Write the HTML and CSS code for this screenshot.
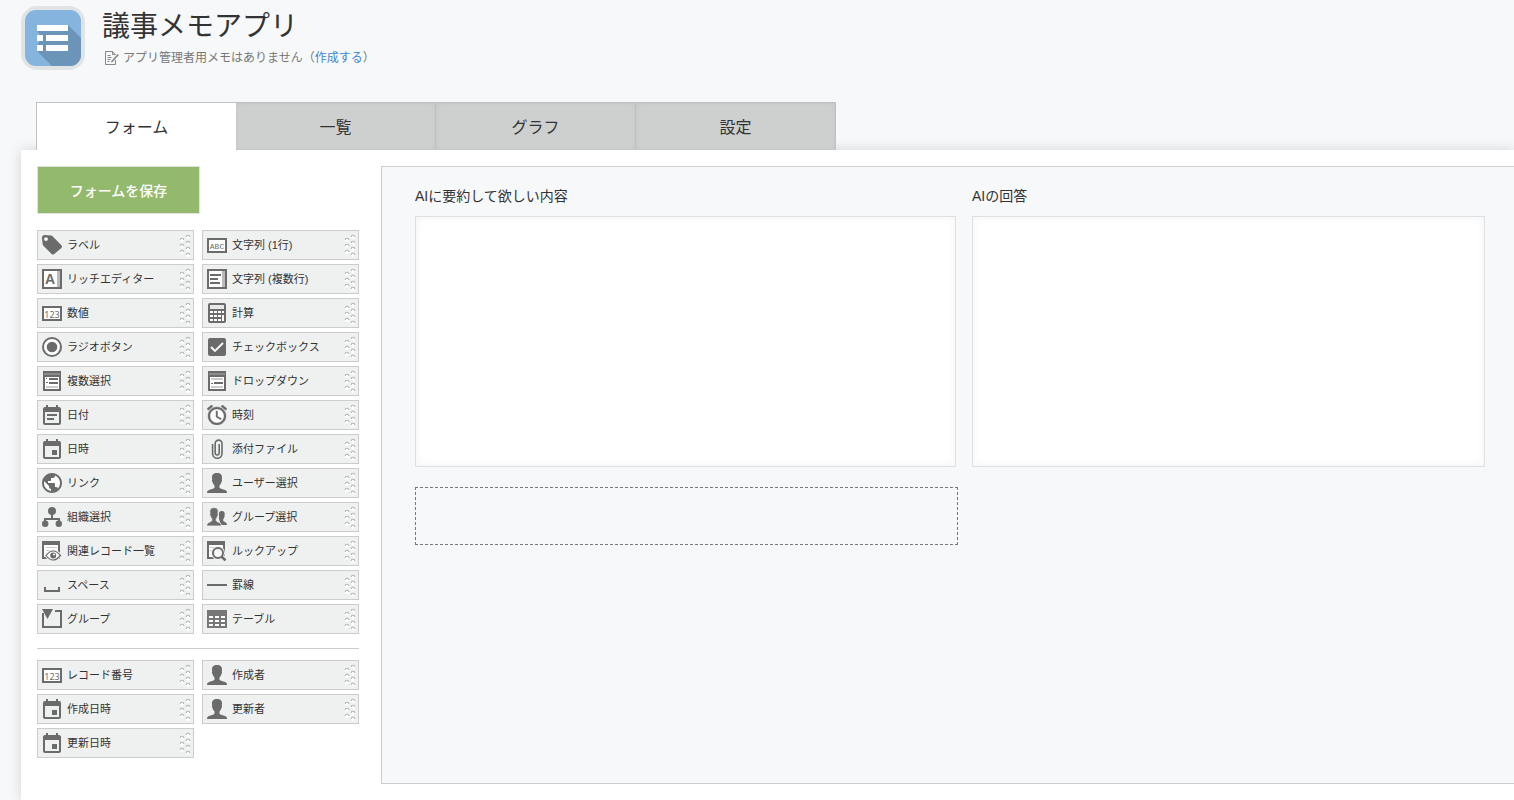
FILE: index.html
```
<!DOCTYPE html>
<html lang="ja">
<head>
<meta charset="utf-8">
<meta name="viewport" content="width=device-width, initial-scale=1">
<title>議事メモアプリ</title>
<link rel="stylesheet" href="styles.css">
</head>
<body>
<svg class="sprite" aria-hidden="true">
  <symbol id="grip" viewBox="0 0 12 24">
    <g fill="#fff"><circle cx="3" cy="7" r="2"/><circle cx="3" cy="13" r="2"/><circle cx="3" cy="19" r="2"/><circle cx="9" cy="4" r="2"/><circle cx="9" cy="10" r="2"/><circle cx="9" cy="16" r="2"/><circle cx="9" cy="22" r="2"/></g>
    <path fill="none" stroke="#b4b5b5" stroke-width="1.1" d="M1.2 7q0-1.8 1.8-1.8T4.8 7M1.2 13q0-1.8 1.8-1.8T4.8 13M1.2 19q0-1.8 1.8-1.8T4.8 19M7.2 4q0-1.8 1.8-1.8T10.8 4M7.2 10q0-1.8 1.8-1.8T10.8 10M7.2 16q0-1.8 1.8-1.8T10.8 16M7.2 22q0-1.8 1.8-1.8T10.8 22"/>
  </symbol>
  <symbol id="i-label" viewBox="2 2 20 20"><circle cx="6" cy="6" r="2" fill="#fff"/><path d="M21.4 12.2l-8.600-8.600C12.200 2.900 11.600 2.700 11 2.600L5 2C3 1.900 1.900 3 2 5l.6 6c.1.600.3 1.200.8 1.700l8.200 8.300c.7.800 1.900.8 2.700 0l7.100-6.100c.8-.8.8-1.900 0-2.700zM6 8a1.900 1.900 0 1 1 0-3.800A1.900 1.900 0 0 1 6 8z"/></symbol>
  <symbol id="i-rich" viewBox="0 0 20 20"><path d="M0 0h20v20H0z"/><path fill="#fff" d="M2 2h13v16H2z"/><path fill="#bbb" d="M15 2h3v16h-3z"/><text x="8" y="15" font-size="14" font-weight="700" text-anchor="middle">A</text></symbol>
  <symbol id="i-number" viewBox="0 0 20 20"><path d="M0 3h20v15H0z"/><path fill="#fff" d="M2 5h16v11H2z"/><text x="10" y="15" font-size="9" text-anchor="middle" class="digits">123</text></symbol>
  <symbol id="i-text" viewBox="0 0 20 20"><path d="M0 3h20v15H0z"/><path fill="#fff" d="M2 5h16v11H2z"/><text x="10" y="14" font-size="8" text-anchor="middle" class="mono">ABC</text></symbol>
  <symbol id="i-radio" viewBox="0 0 20 20"><circle cx="10" cy="10" r="9" fill="#fff" stroke="#6b6b6b" stroke-width="2"/><circle cx="10" cy="10" r="5.300"/></symbol>
  <symbol id="i-multitext" viewBox="0 0 20 20"><path d="M0 0h20v20H0z"/><path fill="#fff" d="M2 2h13v16H2z"/><path fill="#bbb" d="M15 2h3v16h-3z"/><path d="M3 5h11v2H3zM3 9h8v2H3zM3 13h10v2H3z"/></symbol>
  <symbol id="i-calc" viewBox="0 0 20 20"><path d="M3 0h14a2 2 0 0 1 2 2v16a2 2 0 0 1-2 2H3a2 2 0 0 1-2-2V2a2 2 0 0 1 2-2z"/><path fill="#e7e8e8" d="M3 2h14v4H3z"/><path fill="#fff" d="M3 8h3v2H3zm4 0h3v2H7zm4 0h3v2h-3zm4 0h2v2h-2zM3 12h3v2H3zm4 0h3v2H7zm4 0h3v2h-3zM3 16h3v2H3zm4 0h3v2H7zm4 0h3v2h-3zm4-4h2v6h-2z"/></symbol>
  <symbol id="i-check" viewBox="0 0 20 20"><rect x="1" y="1" width="18" height="18" rx="2"/><path fill="none" stroke="#fff" stroke-width="1.800" d="M4 10l4 4 8-8"/></symbol>
  <symbol id="i-multiselect" viewBox="0 0 20 20"><path d="M1 0h18v20H1z"/><path fill="#8b8b8b" d="M2 2h16v2H2z"/><path fill="#fff" d="M3 6h14v12H3z"/><path d="M7 7h9v2H7zM7 11h9v2H7zM4 7h1v1H4zm0 4h2v1H4z"/><path fill="#ccc" d="M4 15h12v2H4z"/></symbol>
  <symbol id="i-dropdown" viewBox="0 0 20 20"><path d="M1 0h18v20H1z"/><path fill="#8b8b8b" d="M2 2h16v2H2z"/><path fill="#fff" d="M3 6h14v12H3z"/><path d="M7 11h9v2H7zM4 12h2v1H4z"/><path fill="#ccc" d="M4 7h12v2H4zM4 15h12v2H4z"/></symbol>
  <symbol id="i-date" viewBox="2 1 20 20"><path d="M17 10H7v2h10v-2zm2-7h-1V1h-2v2H8V1H6v2H5c-1.110 0-1.990.9-1.990 2L3 19c0 1.100.89 2 2 2h14c1.100 0 2-.9 2-2V5c0-1.100-.9-2-2-2zm0 16H5V8h14v11zm-5-5H7v2h7v-2z"/></symbol>
  <symbol id="i-datetime" viewBox="2 1 20 20"><path d="M17 12h-5v5h5v-5zM16 1v2H8V1H6v2H5c-1.110 0-1.990.9-1.990 2L3 19c0 1.100.89 2 2 2h14c1.100 0 2-.9 2-2V5c0-1.100-.9-2-2-2h-1V1h-2zm3 18H5V8h14v11z"/></symbol>
  <symbol id="i-time" viewBox="2 2 20 20"><circle cx="12" cy="13" r="8" fill="#fff"/><path stroke="#6b6b6b" stroke-width=".4" d="M22 5.720l-4.600-3.860-1.290 1.530 4.600 3.860L22 5.720zM7.880 3.390L6.600 1.860 2 5.710l1.290 1.530 4.590-3.850zM12.500 8H11v6l4.750 2.850.75-1.230-4-2.370V8zM12 4c-4.970 0-9 4.030-9 9s4.020 9 9 9c4.970 0 9-4.030 9-9s-4.030-9-9-9zm0 16c-3.870 0-7-3.130-7-7s3.130-7 7-7 7 3.130 7 7-3.130 7-7 7z"/></symbol>
  <symbol id="i-clip" viewBox="0 0 20 20"><path fill="none" stroke="#6b6b6b" stroke-width="1.600" d="M12.200 5v9a2 2 0 0 1-4 0V4.500a3.400 3.400 0 0 1 6.800 0V14.500a4.700 4.700 0 0 1-9.400 0V5"/></symbol>
  <symbol id="i-link" viewBox="2 2 20 20"><circle cx="12" cy="12" r="9" fill="#fff"/><path d="M12 2C6.480 2 2 6.480 2 12s4.480 10 10 10 10-4.480 10-10S17.520 2 12 2zm-1 17.930c-3.950-.49-7-3.850-7-7.930 0-.62.08-1.210.21-1.790L9 15v1c0 1.100.9 2 2 2v1.930zm6.900-2.540c-.26-.81-1-1.390-1.900-1.390h-1v-3c0-.55-.45-1-1-1H8v-2h2c.55 0 1-.45 1-1V7h2c1.100 0 2-.9 2-2v-.41c2.930 1.190 5 4.060 5 7.410 0 2.080-.8 3.970-2.100 5.390z"/></symbol>
  <symbol id="i-user" viewBox="0 0 20 20"><path d="M10 0c3.600 0 5.200 1.800 5 4.600 0 1-.1 1.500-.2 2.200.5.400.3 1.600-.4 2.200-.4 1.800-1 2.700-1.900 3.500v2.300c1 1.300 3.700 1.400 5.500 2.100 1.300.5 2 1.400 2 3.100H0c0-1.700.7-2.600 2-3.100 1.800-.7 4.500-.8 5.500-2.100v-2.300c-.9-.8-1.500-1.700-1.900-3.500-.7-.6-.9-1.800-.4-2.200C5.100 6.100 5 5.600 5 4.600 4.800 1.800 6.400 0 10 0z"/></symbol>
  <symbol id="i-org" viewBox="0 0 20 20"><circle cx="10" cy="4" r="4"/><circle cx="3.200" cy="16.800" r="3.200"/><circle cx="16.800" cy="16.800" r="3.200"/><path fill="none" stroke="#6b6b6b" stroke-width="2" d="M10 6v6M3 16v-4h14v4"/></symbol>
  <symbol id="i-group-user" viewBox="0 0 20 20"><path d="M14.800 4c2.200 0 3 1.200 2.900 3.100l-.2 1.600c.4.400.2 1.200-.3 1.600-.2 1-.6 1.600-1 2v1.700c.6 1 3.800.8 3.800 4h-6L12 12V6c.5-1.400 1.300-2 2.800-2z"/><path stroke="#eff1f1" stroke-width=".8" d="M7 .6c3.200 0 4.400 1.700 4.200 4.200L11 6.900c.5.500.3 1.500-.4 2-.3 1.400-.8 2.200-1.400 2.700v2.200c.9 1.600 5.200 1.100 5.200 5.200H-.4c0-4.100 4.300-3.600 5.200-5.200v-2.200c-.6-.5-1.100-1.300-1.400-2.700-.7-.5-.9-1.500-.4-2l-.2-2.100C2.600 2.300 3.800.6 7 .6z"/></symbol>
  <symbol id="i-related" viewBox="0 0 20 20"><path d="M0 0h18v18H0z"/><path fill="#fff" d="M2 4h14v12H2z"/><path fill="#ccc" d="M4 6h11v1H4zM4 9h5v1H4z"/><path fill="#fff" stroke="#eff1f1" stroke-width="3" d="M4 14.500q7-9 14.500 0q-7.500 9-14.500 0z"/><path fill="#fff" stroke="#6b6b6b" stroke-width="1.200" d="M4 14.500q7-9 14.500 0q-7.500 9-14.500 0z"/><circle cx="11.200" cy="14.500" r="3"/><circle cx="12" cy="13.500" r="1" fill="#fff"/></symbol>
  <symbol id="i-lookup" viewBox="0 0 20 20"><path d="M0 0h18v18H0z"/><path fill="#fff" d="M2 4h14v12H2z"/><path fill="#ccc" d="M3 6h12v1H3zM3 9h3v1H3z"/><circle cx="11" cy="12" r="5" fill="#eff1f1" stroke="#eff1f1" stroke-width="4"/><path fill="#eff1f1" d="M13 15h6v4h-6z"/><circle cx="11" cy="12" r="5" fill="#f7f8f8" stroke="#6b6b6b" stroke-width="2"/><path stroke="#6b6b6b" stroke-width="2.500" d="M14.500 15.500l4 4"/></symbol>
  <symbol id="i-space" viewBox="0 0 20 20"><path fill="none" stroke="#6b6b6b" stroke-width="2" d="M3 12v4h14v-4"/></symbol>
  <symbol id="i-line" viewBox="0 0 20 20"><path d="M0 9h20v2H0z"/></symbol>
  <symbol id="i-group" viewBox="0 0 20 20"><path d="M0 0h11L5.500 10z"/><path fill="none" stroke="#6b6b6b" stroke-width="2" d="M1 4v14h18V2h-6"/></symbol>
  <symbol id="i-table" viewBox="0 0 20 20"><path fill="#777" d="M0 1h20v18H0z"/><path fill="#fff" d="M2 7h4v2H2zm6 0h4v2H8zm6 0h4v2h-4zM2 11h4v2H2zm6 0h4v2H8zm6 0h4v2h-4zM2 15h4v2H2zm6 0h4v2H8zm6 0h4v2h-4z"/></symbol>
</svg>

<header class="app-header">
  <svg class="app-icon" viewBox="0 0 64 64" role="img" aria-label="アプリアイコン">
    <defs><clipPath id="tile"><rect x="4" y="4" width="56" height="56" rx="11"/></clipPath></defs>
    <rect width="64" height="64" rx="16" fill="#e0e4e4"/>
    <g clip-path="url(#tile)">
      <path fill="#85b5df" d="M4 4h56v56H4z"/>
      <path fill="#6c93b8" d="M47 19l17 17v28H35L16 45l3-3-3-3 3-4-3-4 3-3-3-3z"/>
    </g>
    <path fill="#fff" d="M16 19h31v6H16zM16 29h6v6h-6zM25 29h22v6H25zM16 39h6v6h-6zM25 39h22v6H25z"/>
  </svg>
  <div class="app-info">
    <h1 class="app-title">議事メモアプリ</h1>
    <p class="app-memo">
      <svg class="memo-icon" viewBox="0 0 14 14" fill="none" stroke="#888" aria-hidden="true"><path d="M10.500 4L7.500.5H.5v13h10V9M7.500.5v3h3"/><path d="M2.500 4.500h3M2.500 6.500h4M2.500 8.500h3M2.500 10.500h2"/><path stroke-width="1.800" d="M13.300 3.500l-5.500 6"/><path d="M7.500 9l-1 2 2-1"/></svg>
      <span>アプリ管理者用メモはありません（<a class="memo-link" href="#">作成する</a>）</span>
    </p>
  </div>
</header>

<nav class="tabs">
  <a class="tab tab-active" href="#" aria-current="page">フォーム</a>
  <a class="tab" href="#">一覧</a>
  <a class="tab" href="#">グラフ</a>
  <a class="tab" href="#">設定</a>
</nav>

<main class="panel">
  <aside class="sidebar">
    <button class="save" type="button">フォームを保存</button>
    <ul class="palette">
      <li><button class="field" type="button"><svg class="icon"><use href="#i-label"/></svg><span class="name">ラベル</span><svg class="grip"><use href="#grip"/></svg></button></li>
      <li><button class="field" type="button"><svg class="icon"><use href="#i-text"/></svg><span class="name">文字列 (1行)</span><svg class="grip"><use href="#grip"/></svg></button></li>
      <li><button class="field" type="button"><svg class="icon"><use href="#i-rich"/></svg><span class="name">リッチエディター</span><svg class="grip"><use href="#grip"/></svg></button></li>
      <li><button class="field" type="button"><svg class="icon"><use href="#i-multitext"/></svg><span class="name">文字列 (複数行)</span><svg class="grip"><use href="#grip"/></svg></button></li>
      <li><button class="field" type="button"><svg class="icon"><use href="#i-number"/></svg><span class="name">数値</span><svg class="grip"><use href="#grip"/></svg></button></li>
      <li><button class="field" type="button"><svg class="icon"><use href="#i-calc"/></svg><span class="name">計算</span><svg class="grip"><use href="#grip"/></svg></button></li>
      <li><button class="field" type="button"><svg class="icon"><use href="#i-radio"/></svg><span class="name">ラジオボタン</span><svg class="grip"><use href="#grip"/></svg></button></li>
      <li><button class="field" type="button"><svg class="icon"><use href="#i-check"/></svg><span class="name">チェックボックス</span><svg class="grip"><use href="#grip"/></svg></button></li>
      <li><button class="field" type="button"><svg class="icon"><use href="#i-multiselect"/></svg><span class="name">複数選択</span><svg class="grip"><use href="#grip"/></svg></button></li>
      <li><button class="field" type="button"><svg class="icon"><use href="#i-dropdown"/></svg><span class="name">ドロップダウン</span><svg class="grip"><use href="#grip"/></svg></button></li>
      <li><button class="field" type="button"><svg class="icon"><use href="#i-date"/></svg><span class="name">日付</span><svg class="grip"><use href="#grip"/></svg></button></li>
      <li><button class="field" type="button"><svg class="icon"><use href="#i-time"/></svg><span class="name">時刻</span><svg class="grip"><use href="#grip"/></svg></button></li>
      <li><button class="field" type="button"><svg class="icon"><use href="#i-datetime"/></svg><span class="name">日時</span><svg class="grip"><use href="#grip"/></svg></button></li>
      <li><button class="field" type="button"><svg class="icon"><use href="#i-clip"/></svg><span class="name">添付ファイル</span><svg class="grip"><use href="#grip"/></svg></button></li>
      <li><button class="field" type="button"><svg class="icon"><use href="#i-link"/></svg><span class="name">リンク</span><svg class="grip"><use href="#grip"/></svg></button></li>
      <li><button class="field" type="button"><svg class="icon"><use href="#i-user"/></svg><span class="name">ユーザー選択</span><svg class="grip"><use href="#grip"/></svg></button></li>
      <li><button class="field" type="button"><svg class="icon"><use href="#i-org"/></svg><span class="name">組織選択</span><svg class="grip"><use href="#grip"/></svg></button></li>
      <li><button class="field" type="button"><svg class="icon"><use href="#i-group-user"/></svg><span class="name">グループ選択</span><svg class="grip"><use href="#grip"/></svg></button></li>
      <li><button class="field" type="button"><svg class="icon"><use href="#i-related"/></svg><span class="name">関連レコード一覧</span><svg class="grip"><use href="#grip"/></svg></button></li>
      <li><button class="field" type="button"><svg class="icon"><use href="#i-lookup"/></svg><span class="name">ルックアップ</span><svg class="grip"><use href="#grip"/></svg></button></li>
      <li><button class="field" type="button"><svg class="icon"><use href="#i-space"/></svg><span class="name">スペース</span><svg class="grip"><use href="#grip"/></svg></button></li>
      <li><button class="field" type="button"><svg class="icon"><use href="#i-line"/></svg><span class="name">罫線</span><svg class="grip"><use href="#grip"/></svg></button></li>
      <li><button class="field" type="button"><svg class="icon"><use href="#i-group"/></svg><span class="name">グループ</span><svg class="grip"><use href="#grip"/></svg></button></li>
      <li><button class="field" type="button"><svg class="icon"><use href="#i-table"/></svg><span class="name">テーブル</span><svg class="grip"><use href="#grip"/></svg></button></li>
    </ul>
    <hr class="divider">
    <ul class="palette">
      <li><button class="field" type="button"><svg class="icon"><use href="#i-number"/></svg><span class="name">レコード番号</span><svg class="grip"><use href="#grip"/></svg></button></li>
      <li><button class="field" type="button"><svg class="icon"><use href="#i-user"/></svg><span class="name">作成者</span><svg class="grip"><use href="#grip"/></svg></button></li>
      <li><button class="field" type="button"><svg class="icon"><use href="#i-datetime"/></svg><span class="name">作成日時</span><svg class="grip"><use href="#grip"/></svg></button></li>
      <li><button class="field" type="button"><svg class="icon"><use href="#i-user"/></svg><span class="name">更新者</span><svg class="grip"><use href="#grip"/></svg></button></li>
      <li><button class="field" type="button"><svg class="icon"><use href="#i-datetime"/></svg><span class="name">更新日時</span><svg class="grip"><use href="#grip"/></svg></button></li>
    </ul>
  </aside>

  <section class="canvas">
    <div class="form-row">
      <div class="form-field">
        <label class="form-label" for="source">AIに要約して欲しい内容</label>
        <textarea class="form-text" id="source"></textarea>
      </div>
      <div class="form-field">
        <label class="form-label" for="answer">AIの回答</label>
        <textarea class="form-text" id="answer"></textarea>
      </div>
    </div>
    <div class="drop-row"></div>
  </section>
</main>
</body>
</html>
```

FILE: styles.css
```
* { box-sizing: border-box; }

body {
  margin: 0;
  min-height: 100vh;
  display: flex;
  flex-direction: column;
  background: #f7f8fa;
  color: #333;
  font-family: "Liberation Sans", "Noto Sans CJK JP", sans-serif;
  font-size: 14px;
}

button, textarea { font-family: inherit; }

.sprite { display: none; }

.app-header {
  display: flex;
  gap: 17px;
  padding: 6px 21px 0;
  margin-bottom: 32px;
}

.app-icon { width: 64px; height: 64px; flex: none; }

.app-title {
  margin: 0;
  font-size: 28px;
  font-weight: 400;
  line-height: 42px;
}

.app-memo {
  display: flex;
  align-items: center;
  gap: 4px;
  margin: 0;
  padding-left: 3px;
  color: #777;
  font-size: 12px;
  line-height: 20px;
}

.memo-icon { width: 14px; height: 14px; }

.memo-link { color: #3d86d4; text-decoration: none; }

.tabs {
  position: relative;
  z-index: 1;
  display: flex;
  width: 800px;
  max-width: 100%;
  margin-left: 36px;
}

.tab {
  flex: 1;
  height: 48px;
  border-top: 1px solid #bdc1c1;
  border-right: 1px solid #bdc1c1;
  background: #ced0cf;
  box-shadow: inset 0 0 4px rgba(0, 0, 0, 0.06);
  color: #333;
  font-size: 16px;
  line-height: 50px;
  text-align: center;
  text-decoration: none;
}

.tab-active {
  border-right: 0;
  border-left: 1px solid #bdc1c1;
  background: #fff;
  box-shadow: none;
}

.panel {
  flex: 1;
  display: flex;
  gap: 22px;
  margin-left: 21px;
  padding: 16px 0 16px 16px;
  background: #fff;
  box-shadow: 0 0 12px rgba(0, 0, 0, 0.15);
}

.sidebar { flex: none; width: 322px; }

.save {
  display: block;
  width: 163px;
  height: 48px;
  margin-bottom: 16px;
  padding: 0 0 1px;
  border: 1px solid #e0e3e1;
  background: #93b96c;
  color: #fff;
  font-size: 14px;
  font-weight: 500;
}

.palette {
  display: grid;
  grid-template-columns: 1fr 1fr;
  gap: 4px 8px;
  margin: 0;
  padding: 0;
  list-style: none;
}

.field {
  display: flex;
  align-items: center;
  gap: 5px;
  width: 100%;
  height: 30px;
  padding: 0 2px 0 4px;
  border: 1px solid #ccc;
  background: #eff1f1;
  color: #333;
  font-size: 11px;
  text-align: left;
}

.name {
  flex: 1;
  padding-bottom: 2px;
  white-space: nowrap;
}

.icon { width: 20px; height: 20px; fill: #6b6b6b; }

.digits { font-family: "Noto Sans", sans-serif; }

.mono { font-family: "Liberation Mono", monospace; }

.grip { width: 12px; height: 24px; }

.divider {
  margin: 14px 0 11px;
  border: 0;
  border-top: 1px solid #ccc;
}

.canvas {
  flex: 1;
  min-width: 0;
  padding: 18px 29px 18px 33px;
  border: 1px solid #cbcecf;
  border-right: 0;
  background: #f7f8fa;
}

.form-row {
  display: grid;
  grid-template-columns: 541fr 513fr;
  gap: 16px;
}

.form-label {
  display: block;
  margin-bottom: 9px;
  line-height: 22px;
}

.form-text {
  display: block;
  width: 100%;
  height: 251px;
  border: 1px solid #dee1e3;
  border-radius: 0;
  background: #fff;
  box-shadow: inset 0 0 8px #f2f2f2;
  resize: none;
}

.drop-row {
  width: 543px;
  max-width: 100%;
  height: 58px;
  margin-top: 20px;
  border: 1px dashed #777;
}
```
